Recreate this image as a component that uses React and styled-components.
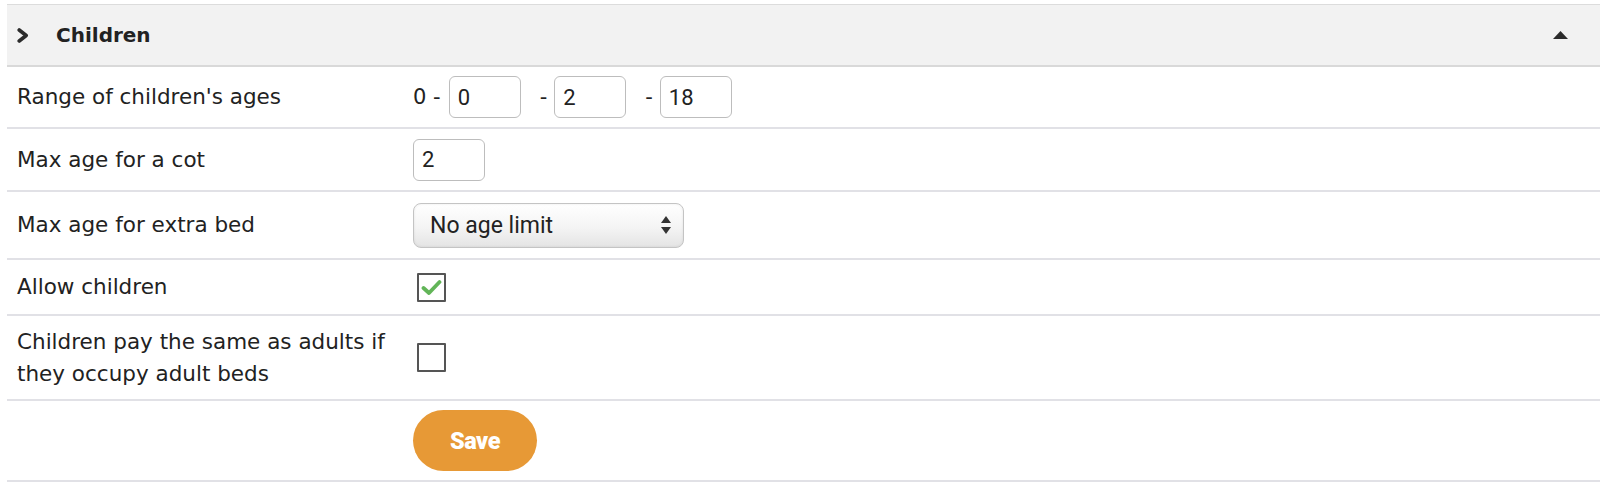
import React from "react";
import styled, { createGlobalStyle } from "styled-components";

const Global = createGlobalStyle`
  html, body { margin: 0; padding: 0; background: #fff; }
  body { font-family: "DejaVu Sans", "Open Sans", sans-serif; color: #222; }
  * { box-sizing: border-box; }
`;

const Panel = styled.section`
  margin: 4px 0 0 7px;
  border-top: 1.5px solid #dcdcdc;
`;

const Header = styled.div`
  display: flex;
  align-items: center;
  height: 62px;
  padding: 0 32px 0 10px;
  background: #f2f2f2;
  border-bottom: 2px solid #d9d9d9;
`;

const HeaderTitle = styled.h2`
  flex: 1;
  margin: 0 0 0 27px;
  font-size: 20px;
  font-weight: 700;
  color: #222;
`;

const Row = styled.div`
  display: grid;
  grid-template-columns: 396px 1fr;
  align-items: center;
  border-bottom: 2px solid #e1e1e6;
  height: ${(p) => p.$h}px;
`;

const Label = styled.div`
  padding: 0 10px;
  font-size: 21.5px;
  line-height: 31.5px;
  color: #222;
`;

const Field = styled.div`
  display: flex;
  align-items: center;
  padding: 0 10px;
  font-family: Roboto, "Liberation Sans", sans-serif;
  font-size: 22px;
  color: #222;
`;

const Lead = styled.span`
  font-family: "DejaVu Sans", sans-serif;
  font-size: 21px;
  margin-right: 8px;
  white-space: pre;
`;

const Sep = styled.span`
  font-family: "DejaVu Sans", sans-serif;
  font-size: 21px;
  margin: 0 7px 0 19px;
`;

const NumInput = styled.input`
  width: 72px;
  height: 42px;
  border: 1.5px solid #bdbdbd;
  border-radius: 6px;
  padding: 0 8px;
  font-family: Roboto, "Liberation Sans", sans-serif;
  font-size: 22px;
  color: #222;
  background: #fff;
  outline: none;
`;

const Select = styled.div`
  position: relative;
  width: 271px;
  height: 45px;
  border: 1.5px solid #c4c4c4;
  border-radius: 8px;
  background: linear-gradient(#ffffff 0%, #f4f4f4 55%, #e4e4e4 100%);
  box-shadow: inset 0 0 3px rgba(0,0,0,0.08);
  display: flex;
  align-items: center;
  padding: 0 16px;
  font-family: Roboto, "Liberation Sans", sans-serif;
  font-size: 23px;
  color: #222;
`;

const SelectArrows = styled.svg`
  position: absolute;
  right: 12px;
  top: 50%;
  transform: translateY(-50%);
`;

const Box = styled.span`
  display: inline-flex;
  align-items: center;
  justify-content: center;
  width: 29px;
  height: 29px;
  margin-left: 4px;
  border: 2px solid #555;
  border-radius: 1px;
  background: #fff;
`;

const SaveButton = styled.button`
  width: 124px;
  height: 61px;
  border: none;
  border-radius: 31px;
  background: #e79936;
  color: #fff;
  font-family: Roboto, "Liberation Sans", sans-serif;
  font-weight: 900;
  font-size: 23.5px;
  letter-spacing: -0.4px;
  cursor: pointer;
`;

const Chevron = () => (
  <svg width="12" height="15" viewBox="0 0 12 15">
    <polyline points="2.2,2 9.2,7.5 2.2,13" fill="none" stroke="#2b2b2b" strokeWidth="3.6" strokeLinejoin="round" strokeLinecap="round" />
  </svg>
);

const Caret = () => (
  <svg width="15" height="8" viewBox="0 0 15 8">
    <polygon points="0,8 7.5,0 15,8" fill="#2b2b2b" />
  </svg>
);

const Check = ({ checked }) => (
  <Box>
    {checked && (
      <svg width="21" height="17" viewBox="0 0 21 17">
        <polyline points="2.5,9 8,14 18.5,3" fill="none" stroke="#62b558" strokeWidth="3.8" strokeLinecap="round" strokeLinejoin="round" />
      </svg>
    )}
  </Box>
);

export default function App() {
  return (
    <>
      <Global />
      <Panel>
        <Header>
          <Chevron />
          <HeaderTitle>Children</HeaderTitle>
          <Caret />
        </Header>
        <Row $h={62}>
          <Label>Range of children's ages</Label>
          <Field>
            <Lead>0 -</Lead>
            <NumInput defaultValue="0" />
            <Sep>-</Sep>
            <NumInput defaultValue="2" />
            <Sep>-</Sep>
            <NumInput defaultValue="18" />
          </Field>
        </Row>
        <Row $h={63}>
          <Label>Max age for a cot</Label>
          <Field>
            <NumInput defaultValue="2" />
          </Field>
        </Row>
        <Row $h={68}>
          <Label>Max age for extra bed</Label>
          <Field>
            <Select>
              No age limit
              <SelectArrows width="10" height="20" viewBox="0 0 10 20">
                <polygon points="0,8 5,1 10,8" fill="#333" />
                <polygon points="0,12 5,19 10,12" fill="#333" />
              </SelectArrows>
            </Select>
          </Field>
        </Row>
        <Row $h={56}>
          <Label>Allow children</Label>
          <Field>
            <Check checked />
          </Field>
        </Row>
        <Row $h={85}>
          <Label>Children pay the same as adults if they occupy adult beds</Label>
          <Field>
            <Check />
          </Field>
        </Row>
        <Row $h={81}>
          <Label />
          <Field>
            <SaveButton>Save</SaveButton>
          </Field>
        </Row>
      </Panel>
    </>
  );
}
